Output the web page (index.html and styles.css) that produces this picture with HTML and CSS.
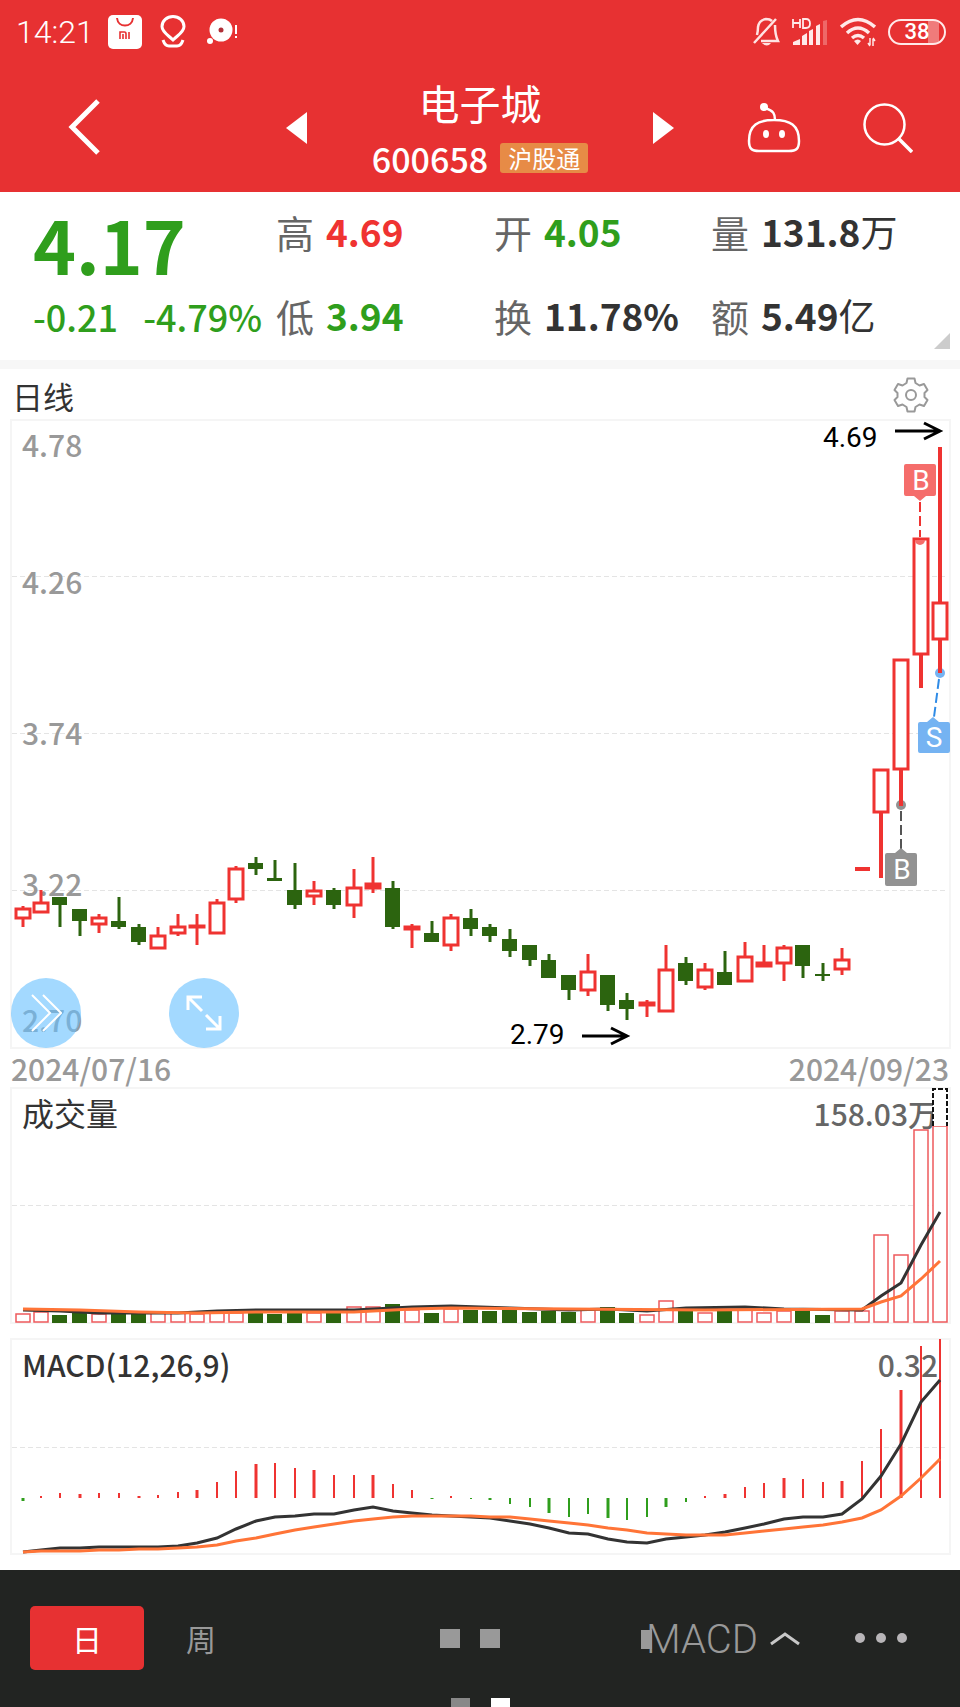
FILE: index.html
```html
<!DOCTYPE html>
<html lang="zh-CN">
<head>
<meta charset="utf-8">
<meta name="viewport" content="width=device-width, initial-scale=1">
<title>电子城 600658</title>
<link rel="stylesheet" href="styles.css">
</head>
<body>
	<header class="top">
		<div class="status">
			<span class="clock">14:21</span>
			<svg class="s-mi" width="34" height="34" viewBox="0 0 34 34">
				<rect width="34" height="34" rx="5" fill="#fff"/>
				<path d="M9 3c1 10 15 10 16 0" fill="none" stroke="#e73132" stroke-width="2"/>
				<path d="M12 24v-7h4.500q1.500 0 1.500 2v5M15 19v5M21 17v7" fill="none" stroke="#e73132" stroke-width="1.600"/>
			</svg>
			<svg class="s-pin" width="26" height="34" viewBox="0 0 26 34" fill="none" stroke="#fff" stroke-width="3">
				<path d="M13 25C8 20 2 17 2 11.500a11 10 0 0 1 22 0C24 17 18 20 13 25z"/>
				<path d="M3 25q2 6 6 6h8q4 0 6-6"/>
			</svg>
			<svg class="s-chat" width="32" height="28" viewBox="0 0 32 28" fill="#fff">
				<circle cx="14" cy="12" r="11.500"/>
				<circle cx="3" cy="23" r="3"/>
				<circle cx="14" cy="12" r="2.500" fill="#b03038"/>
				<path d="M28 7h2v9h-2zM28 18h2v2h-2z"/>
			</svg>
			<div class="status-right">
				<svg width="28" height="30" viewBox="0 0 28 30" fill="none" stroke="#ffe3e3" stroke-width="2.500">
					<path d="M2 26L24 2M5 18q1-4 1-8 1-7 8-8 4 0 6 2M23 8q0 10 3 16H9"/>
					<path d="M10 26h9q-4 5-9 0z" fill="#ffe3e3" stroke="none"/>
				</svg>
				<svg width="36" height="28" viewBox="0 0 36 28" fill="#ffe9e9">
					<path d="M1 1v9M8 1v9M1 5h7M11 1v9h3q4 0 4-4.500T14 1z" fill="none" stroke="#ffe9e9" stroke-width="1.800"/>
					<path d="M1 27v-3l7-3v6zM10 27v-9l5-3v12zM17 27V13l4-2v16zM24 27V8l4-2v21z"/>
					<path d="M31 27V3l4-1v25z" opacity=".3"/>
				</svg>
				<svg width="36" height="30" viewBox="0 0 36 30" fill="none" stroke="#ffe9e9" stroke-width="3.500">
					<path d="M1 10q17-15 34 0M7 16q11-10 22 0M12 21q6-5 12 0"/>
					<path d="M14 24q4-3 7 0l-3.500 4z" fill="#ffe9e9" stroke="none"/>
					<path d="M30 21v7M33 22v7M28 26l2 3M35 24l-2-3" stroke-width="1.500"/>
				</svg>
				<span class="battery">38</span>
			</div>
		</div>

		<nav class="nav">
			<button class="icon-btn back" aria-label="返回">
				<svg width="32" height="58" viewBox="0 0 32 58" fill="none" stroke="#fff" stroke-width="5"><path d="M30 2L4 28l26 26"/></svg>
			</button>
			<div class="stock">
				<button class="icon-btn" aria-label="上一只">
					<svg width="21" height="32" viewBox="0 0 21 32"><path d="M21 0v32L0 16z" fill="#fff"/></svg>
				</button>
				<div class="stock-name">
					<h1>电子城</h1>
					<div class="code">600658 <span class="badge">沪股通</span></div>
				</div>
				<button class="icon-btn" aria-label="下一只">
					<svg width="21" height="32" viewBox="0 0 21 32"><path d="M0 0v32l21-16z" fill="#fff"/></svg>
				</button>
			</div>
			<div class="tools">
				<button class="icon-btn" aria-label="助手">
					<svg width="54" height="50" viewBox="0 0 54 50" fill="none" stroke="#fff" stroke-width="2.500">
						<path d="M27 17C43 17 52 22 52 38c0 8-3 10-10 10H12C5 48 2 46 2 38 2 22 11 17 27 17zM28 17c0-6-1-9-10-12"/>
						<circle cx="17" cy="4" r="4" fill="#fff" stroke="none"/>
						<ellipse cx="19" cy="31" rx="3" ry="4" fill="#fff" stroke="none"/>
						<ellipse cx="35" cy="31" rx="3" ry="4" fill="#fff" stroke="none"/>
					</svg>
				</button>
				<button class="icon-btn" aria-label="搜索">
					<svg width="50" height="50" viewBox="0 0 50 50" fill="none" stroke="#fff" stroke-width="2.500">
						<circle cx="21.500" cy="21.500" r="20"/><path d="M35 35l14 14" stroke-width="3.500"/>
					</svg>
				</button>
			</div>
		</nav>
	</header>

	<section class="quote">
		<div class="last">
			<div class="price">4.17</div>
			<div class="change"><span>-0.21</span><span>-4.79%</span></div>
		</div>
		<div class="item">高 <b class="up">4.69</b></div>
		<div class="item">开 <b class="down">4.05</b></div>
		<div class="item">量 <b>131.8<i>万</i></b></div>
		<div class="item">低 <b class="down">3.94</b></div>
		<div class="item">换 <b>11.78%</b></div>
		<div class="item">额 <b>5.49<i>亿</i></b></div>
	</section>

	<main>
		<div class="chart-title">
			<h2>日线</h2>
			<button class="icon-btn" aria-label="设置">
				<svg width="36" height="36" viewBox="0 0 36 36" fill="none" stroke="#999" stroke-width="2" stroke-linejoin="round">
					<path d="M14.500 1.500h7l1 4.500 4 2.500 4.500-1.500 3.500 6-3 3v4l3 3-3.500 6-4.500-1.500-4 2.500-1 4.500h-7l-1-4.500-4-2.500L5 29l-3.500-6 3-3v-4l-3-3L5 7l4.500 1.500 4-2.500z"/>
					<circle cx="18" cy="18" r="5"/>
				</svg>
			</button>
		</div>

		<div class="price-chart">
			<svg class="chart" viewBox="0 0 960 630">
				<path class="frame" d="M11 1H950V629H11z"/>
				<path class="grid" d="M12 157H948M12 314H948M12 471H948"/>
				<g class="axis">
					<text x="22" y="38">4.78</text>
					<text x="22" y="175">4.26</text>
					<text x="22" y="326">3.74</text>
					<text x="22" y="477">3.22</text>
					<text x="22" y="613">2.70</text>
				</g>
				<g id="candles"></g>
				<g class="peak">
					<text x="823" y="28">4.69</text>
					<path d="M895 12H940M924 4l16 8-16 8"/>
					<text x="510" y="625">2.79</text>
					<path d="M582 617H627M611 609l16 8-16 8"/>
				</g>
				<!-- buy / sell points -->
				<g class="mark mark-red">
					<path class="lead" d="M920 83V118"/>
					<path d="M915 121a5 5 0 0 0 10 0z"/>
					<path d="M906 45h28q2 0 2 2v28q0 2-2 2h-8l-6 5-6-5h-8q-2 0-2-2V47q0-2 2-2z"/>
					<text x="921" y="71">B</text>
				</g>
				<g class="mark mark-blue">
					<path class="lead" d="M939 260L934 298"/>
					<circle cx="940" cy="254" r="5"/>
					<path d="M920 303h7l6-5 6 5h9q2 0 2 2v27q0 2-2 2h-28q-2 0-2-2v-27q0-2 2-2z"/>
					<text x="934" y="328">S</text>
				</g>
				<g class="mark mark-gray">
					<path class="lead" d="M901 392V430"/>
					<circle cx="901" cy="386" r="5"/>
					<path d="M887 434h8l6-5 6 5h8q2 0 2 2v29q0 2-2 2h-28q-2 0-2-2v-29q0-2 2-2z"/>
					<text x="902" y="460">B</text>
				</g>
				<path d="M940 221V254M901 351V387" stroke="#ef3331" stroke-width="4"/>
			</svg>
			<div class="floaters">
				<button class="round" aria-label="展开">
					<svg width="32" height="40" viewBox="0 0 32 40" fill="none" stroke="#fff" stroke-width="2"><path d="M2 2l18 18L2 38M13 2l18 18-18 18"/></svg>
				</button>
				<button class="round" aria-label="全屏">
					<svg width="36" height="36" viewBox="0 0 36 36" fill="none" stroke="#fff" stroke-width="3"><path d="M2 15V2h14M2 2l14 14M34 21v13H20M34 34L20 20"/></svg>
				</button>
			</div>
		</div>

		<div class="dates"><span>2024/07/16</span><span>2024/09/23</span></div>

		<svg class="chart volume" viewBox="0 0 960 237">
			<path class="frame" d="M11 1H950V236H11z"/>
			<path class="grid" d="M12 118H948"/>
			<text class="label" x="22" y="39">成交量</text>
			<text class="value" x="938" y="39">158.03万</text>
			<g id="volume"></g>
			<path d="M933 39V2H947V39" fill="#fff" stroke="#111" stroke-width="2" stroke-dasharray="5 2"/>
			<polyline id="vol5" class="line dark"/>
			<polyline id="vol10" class="line orange"/>
		</svg>

		<svg class="chart macd" viewBox="0 0 960 217">
			<path class="frame" d="M11 1H950V216H11z"/>
			<path class="grid" d="M12 109H948"/>
			<text class="label" x="22" y="39">MACD(12,26,9)</text>
			<text class="value" x="938" y="39">0.32</text>
			<g id="macd"></g>
			<polyline id="dif" class="line dark"/>
			<polyline id="dea" class="line orange"/>
		</svg>
	</main>

	<footer>
		<div class="tabs">
			<button class="tab active">日</button>
			<button class="tab">周</button>
			<div class="blocks"><span></span><span></span></div>
			<button class="indicator"><span class="stub"></span>MACD
				<svg width="30" height="14" viewBox="0 0 30 14" fill="none" stroke="#c8c8c8" stroke-width="3"><path d="M1 12L15 2l14 10"/></svg>
			</button>
			<button class="more" aria-label="更多"><span></span><span></span><span></span></button>
		</div>
		<div class="pager"><span></span><span class="on"></span></div>
	</footer>
<script src="chart.js"></script>
</body>
</html>
```
FILE: styles.css
```css
* {
  box-sizing: border-box;
}

body {
  margin: 0;
  background: #fff;
  color: #333;
  font-family: "Noto Sans CJK SC", "Noto Sans", sans-serif;
}

button {
  border: 0;
  padding: 0;
  background: none;
  color: inherit;
  font: inherit;
  cursor: pointer;
}

svg {
  display: block;
}

/* header */
.top {
  background: #e73132;
  color: #fff;
}

.status {
  display: flex;
  align-items: center;
  height: 64px;
  padding: 0 14px 0 16px;
}

.clock {
  width: 92px;
  font: 300 32px Roboto, sans-serif;
}

.s-mi {
  margin-right: 18px;
}

.s-pin {
  margin-right: 21px;
}

.status-right {
  display: flex;
  align-items: center;
  gap: 12px;
  margin-left: auto;
}

.battery {
  width: 58px;
  height: 26px;
  border: 2px solid #ffe9e9;
  border-radius: 13px;
  background: linear-gradient(90deg, transparent 70%, #f07b7b 70%, #f07b7b 90%, transparent 90%);
  font: 500 22px/22px Roboto, sans-serif;
  text-align: center;
}

.nav {
  display: grid;
  grid-template-columns: 1fr auto 1fr;
  align-items: center;
  height: 128px;
}

.back {
  justify-self: start;
  margin-left: 68px;
}

.stock {
  display: flex;
  align-items: center;
  justify-content: space-between;
  width: 388px;
}

.stock-name {
  padding-top: 4px;
  text-align: center;
}

h1 {
  margin: 0;
  font-size: 41px;
  font-weight: 400;
  line-height: 56px;
}

.code {
  display: flex;
  align-items: center;
  gap: 12px;
  height: 56px;
  font-size: 34px;
  font-weight: 500;
}

.badge {
  width: 88px;
  border-radius: 3px;
  background: #e78b46;
  font-size: 24px;
  font-weight: 400;
  line-height: 30px;
}

.tools {
  display: flex;
  align-items: center;
  justify-content: flex-end;
  gap: 62px;
  padding-right: 47px;
}

/* quote */
.quote {
  display: grid;
  grid-template-columns: 276fr 218fr 217fr 249fr;
  grid-template-rows: 78px 90px;
  position: relative;
  border-bottom: 9px solid #f7f7f7;
  height: 177px;
}

.quote::after {
  content: "";
  position: absolute;
  right: 10px;
  bottom: 11px;
  border-left: 16px solid transparent;
  border-bottom: 16px solid #ccc;
}

.last {
  grid-row: span 2;
  padding-left: 33px;
  color: #2f9e1c;
}

.price {
  font-size: 73px;
  font-weight: 700;
  line-height: 102px;
}

.change {
  display: flex;
  gap: 25px;
  font-size: 36px;
  font-weight: 500;
  line-height: 44px;
}

.item {
  display: flex;
  align-items: center;
  gap: 12px;
  color: #666;
  font-size: 38px;
  white-space: nowrap;
}

.item b {
  color: #333;
  font-size: 37px;
  font-weight: 700;
}

.item i {
  font-style: normal;
  font-weight: 400;
}

.item .up {
  color: #ef3331;
}

.item .down {
  color: #2f9e1c;
}

/* charts */
.chart-title {
  display: flex;
  align-items: center;
  justify-content: space-between;
  height: 50px;
  padding: 2px 31px 0 12px;
}

h2 {
  margin: 0;
  font-size: 31px;
  font-weight: 400;
}

.price-chart {
  position: relative;
}

.chart {
  width: 100%;
  height: auto;
}

.chart text {
  font-size: 30px;
}

.frame {
  fill: none;
  stroke: #f5f5f5;
  stroke-width: 2;
}

.grid {
  stroke: #e4e4e4;
  stroke-width: 1;
  stroke-dasharray: 5 3;
  shape-rendering: crispEdges;
}

.axis text {
  fill: #999;
  font-weight: 500;
}

.chart .label {
  fill: #333;
  font-weight: 500;
}

.volume .label {
  font-size: 32px;
  font-weight: 400;
}

.value {
  fill: #666;
  font-weight: 500;
  text-anchor: end;
}

.chart .peak text {
  font-family: Roboto, sans-serif;
  font-size: 28px;
}

.peak path {
  fill: none;
  stroke: #000;
  stroke-width: 3;
}

.mark text {
  fill: #fff;
  font-family: Roboto, sans-serif;
  font-size: 28px;
  text-anchor: middle;
}

.mark .lead {
  stroke-width: 2;
  stroke-dasharray: 10 4;
}

.mark-red {
  fill: #f56d6b;
}

.mark-red .lead {
  stroke: #ef3331;
}

.mark-blue {
  fill: #75b3f2;
}

.mark-blue .lead {
  stroke: #2f8be6;
}

.mark-gray {
  fill: #929292;
}

.mark-gray .lead {
  stroke: #555;
}

.line {
  fill: none;
  stroke-width: 3;
}

.dark {
  stroke: #333;
}

.orange {
  stroke: #ff7437;
}

.floaters {
  display: flex;
  gap: 88px;
  position: absolute;
  left: 11px;
  bottom: 1px;
}

.round {
  display: flex;
  align-items: center;
  justify-content: center;
  width: 70px;
  height: 70px;
  border-radius: 50%;
  background: rgba(102, 191, 255, .6);
}

.dates {
  display: flex;
  align-items: center;
  justify-content: space-between;
  height: 38px;
  padding: 0 11px;
  color: #999;
  font-size: 30px;
  font-weight: 500;
  line-height: 38px;
}

.macd {
  margin: 14px 0 15px;
}

/* bottom bar */
footer {
  padding-top: 36px;
  background: #222422;
  color: #999;
}

.tabs {
  display: grid;
  grid-template-columns: 114px 114px 242fr 300fr auto;
  align-items: center;
  padding: 0 53px 0 30px;
}

.tab {
  height: 64px;
  border-radius: 5px;
  font-size: 30px;
}

.tab.active {
  background: #e73132;
  color: #fff;
}

.blocks {
  display: flex;
  justify-content: flex-end;
  gap: 20px;
}

.blocks span {
  width: 20px;
  height: 19px;
  background: #999;
}

.indicator {
  display: flex;
  align-items: center;
  justify-self: end;
  padding-top: 2px;
  font: 300 40px Roboto, sans-serif;
}

.indicator svg {
  margin-left: 12px;
}

.stub {
  width: 11px;
  height: 19px;
  margin-right: -6px;
  background: #999;
}

.more {
  display: flex;
  gap: 11px;
  margin-left: 55px;
}

.more span {
  width: 10px;
  height: 10px;
  border-radius: 50%;
  background: #b8b5b8;
}

.pager {
  display: flex;
  justify-content: center;
  gap: 21px;
  margin-top: 28px;
}

.pager span {
  width: 19px;
  height: 9px;
  background: #888;
}

.pager .on {
  background: #fff;
}
```
FILE: chart.js
```js
const RED = "#ef3331";
const GREEN = "#2c640f";

// body top, body bottom, high, low, up
const candles = [
	[489,500,487,508,1],[483,494,471,494,1],[478,486,478,508,0],[490,502,490,517,0],
	[498,506,495,514,1],[502,508,478,510,0],[508,523,505,526,0],[516,530,508,530,1],
	[507,515,495,517,1],[506,509,495,526,1],[483,515,480,515,1],[449,481,447,484,1],
	[444,450,438,456,0],[459,462,441,462,0],[471,486,444,490,0],[471,478,462,486,1],
	[471,486,469,490,0],[468,487,450,499,1],[464,470,438,474,1],[469,508,462,510,0],
	[507,511,505,529,1],[514,523,502,523,0],[498,527,495,532,1],[499,510,490,517,0],
	[508,517,505,523,0],[520,532,510,538,0],[526,541,526,547,0],[541,559,535,559,0],
	[556,571,556,581,0],[552,572,535,577,1],[556,586,556,592,0],[581,590,574,601,0],
	[583,587,581,598,1],[550,593,526,593,1],[544,562,538,566,0],[550,569,544,571,1],
	[553,566,532,566,0],[537,563,523,563,1],[543,548,526,548,1],[528,545,526,562,1],
	[526,547,526,559,0],[555,557,544,562,0],[540,551,529,556,1],[448,452,448,452,1],
	[350,394,350,459,1],[240,351,240,387,1],[119,236,119,269,1],[183,221,28,254,1]
];

const volumes = [
	227,225,228,226,227,226,226,226,226,227,226,226,226,227,226,226,
	226,220,220,217,223,226,222,223,224,223,225,224,225,223,220,226,
	228,214,224,226,224,223,226,224,224,228,224,224,148,168,43,39
];

const macd = [
	163,158,155,156,155,155,158,157,154,152,144,133,126,125,130,132,
	137,137,137,146,152,161,158,161,162,166,169,175,179,176,180,182,
	179,169,164,158,156,149,145,140,141,144,143,123,91,52,8,1
];

const dif = [
	214,212,210,210,209,209,209,209,208,205,200,191,183,179,178,176,
	176,172,169,173,175,177,178,179,180,183,186,190,195,196,201,204,
	205,201,199,197,194,190,186,181,179,179,176,161,138,106,64,42
];

const dea = [
	214,213,213,213,212,212,211,211,210,209,207,203,200,196,192,189,
	186,183,181,179,178,178,178,178,179,179,181,183,185,187,190,192,
	195,196,197,197,197,195,193,191,189,187,184,180,172,158,140,121
];

// index, y
const vol5 = [[0,223],[2,224],[4,226],[8,226],[10,224],[12,223],[17,223],[20,220],[22,219],[25,221],[28,223],[30,222],[32,224],[34,221],[37,220],[39,222],[43,223],[44,209],[45,196],[46,158],[47,125]];
const vol10 = [[0,222],[3,223],[6,225],[9,226],[12,225],[17,225],[20,222],[22,221],[28,222],[35,223],[43,222],[44,215],[45,209],[46,192],[47,174]];

function px(i){
	return i == 0 ? 23 : Math.round(21.2 + i * 19.55);
}

function add(id, tag, attrs){
	const el = document.createElementNS("http://www.w3.org/2000/svg", tag);
	for (const k in attrs) el.setAttribute(k, attrs[k]);
	document.getElementById(id).appendChild(el);
}

function line(id, points){
	document.getElementById(id).setAttribute("points", points.map(p => px(p[0]) + "," + p[1]).join(" "));
}

candles.forEach(([top, bottom, high, low, up], i) => {
	const x = px(i);
	const color = up ? RED : GREEN;
	const w = i > 43 ? 4 : 3;
	add("candles", "path", {d: `M${x} ${high}V${low}`, stroke: color, "stroke-width": w});
	if (i == 43) {
		add("candles", "rect", {x: x - 7, y: top, width: 15, height: 4, fill: RED});
	} else if (up) {
		add("candles", "rect", {x: x - 7, y: top + 1, width: 14, height: Math.max(bottom - top - 2, 1), fill: bottom - top > 6 ? "#fff" : RED, stroke: RED, "stroke-width": 3});
	} else {
		add("candles", "rect", {x: x - 8, y: top, width: 15, height: bottom - top, fill: GREEN});
	}
});

volumes.forEach((y, i) => {
	const x = px(i);
	if (candles[i][4]) {
		add("volume", "rect", {x: x - 7, y: y, width: 14, height: 235 - y, fill: "#fff", stroke: "#ee5a5c", "stroke-width": 1.5});
	} else {
		add("volume", "rect", {x: x - 8, y: y, width: 15, height: 236 - y, fill: GREEN});
	}
});

macd.forEach((y, i) => {
	add("macd", "path", {d: `M${px(i)} 160V${y}`, stroke: y < 160 ? RED : "#2f9e1c", "stroke-width": i % 3 ? 2 : 3});
});

line("vol5", vol5);
line("vol10", vol10);
line("dif", dif.map((y, i) => [i, y]));
line("dea", dea.map((y, i) => [i, y]));
```
